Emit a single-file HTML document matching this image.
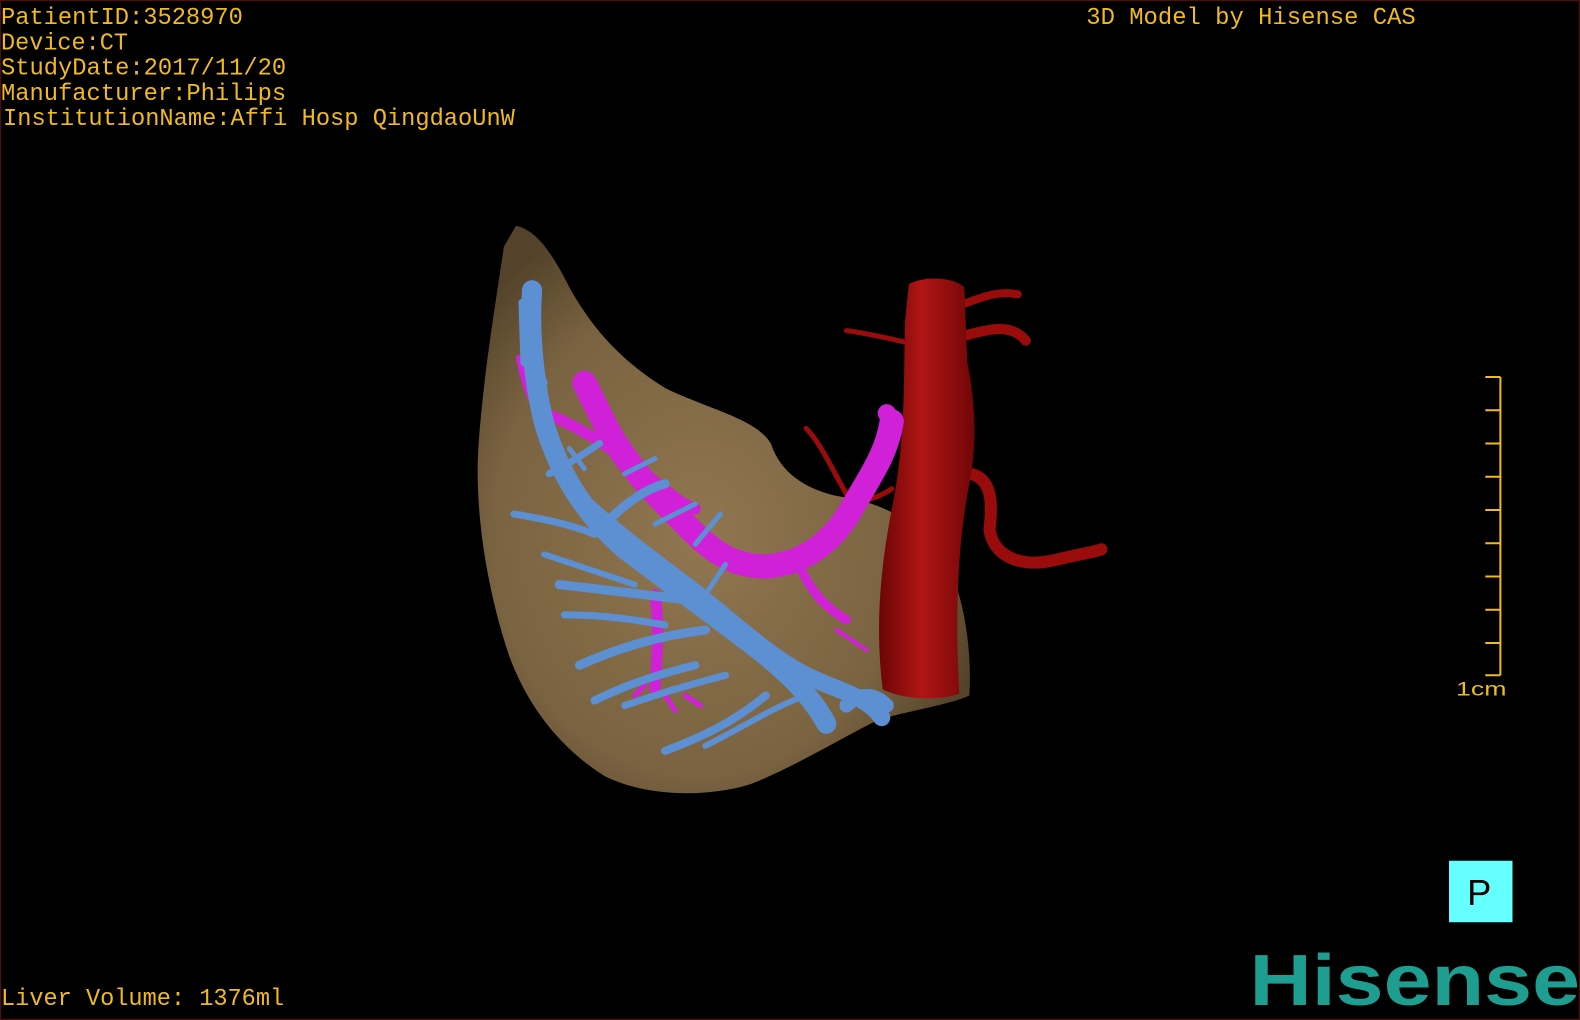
<!DOCTYPE html>
<html><head><meta charset="utf-8"><style>
html,body{margin:0;padding:0;background:#000;width:1580px;height:1020px;overflow:hidden}
svg{display:block}
</style></head><body>
<svg width="1580" height="1020" viewBox="0 0 1568 1012" preserveAspectRatio="none" xmlns="http://www.w3.org/2000/svg">
<defs>
<radialGradient id="lg" cx="0.45" cy="0.55" r="0.6">
<stop offset="0" stop-color="#917650"/><stop offset="0.7" stop-color="#7a6341"/><stop offset="1" stop-color="#54432a"/>
</radialGradient>
<linearGradient id="ag" x1="0" x2="1">
<stop offset="0" stop-color="#6a0505"/><stop offset="0.45" stop-color="#b01515"/><stop offset="1" stop-color="#700606"/>
</linearGradient>
</defs>
<rect x="0.5" y="0.5" width="1567" height="1011" fill="#000" stroke="#5a0a0a"/>
<path d="M512,224 C530,228 545,245 565,285 C590,330 620,360 660,385 C700,405 750,415 765,440 C775,470 800,485 830,492 C870,498 900,510 930,545 C955,575 965,640 962,690 C940,700 900,705 870,715 C830,735 790,760 745,778 C700,792 640,790 600,770 C560,745 525,705 505,650 C485,590 470,510 475,440 C480,370 492,300 500,245 Z" fill="url(#lg)"/>
<g fill="none" stroke="#9a0c0c" stroke-linecap="round">
<path d="M840,328 C870,332 890,338 910,342" stroke-width="5"/>
<path d="M955,302 C975,295 990,288 1010,292" stroke-width="8"/>
<path d="M958,333 C985,325 1005,322 1018,338" stroke-width="10"/>
<path d="M800,425 C815,440 825,465 840,490 C855,500 870,495 885,485" stroke-width="5"/>
<path d="M963,470 C985,475 985,500 982,525 C985,550 1010,565 1050,555 C1070,550 1085,548 1093,545" stroke-width="12"/>
</g>
<path d="M902,282 C915,274 945,274 957,285 L960,360 C968,400 970,440 962,480 C952,530 947,600 952,688 C935,695 898,695 876,684 C868,620 874,560 886,500 C898,440 897,380 898,320 Z" fill="url(#ag)"/>
<g fill="none" stroke="#d020d8" stroke-linecap="round" stroke-linejoin="round">
<path d="M885,418 C880,450 865,470 845,505 C825,540 795,560 760,562 C720,562 700,540 675,515 C650,490 620,460 600,420 C590,400 585,390 580,380" stroke-width="24"/>
<path d="M885,418 L880,410" stroke-width="18"/>
<path d="M535,408 C570,420 600,440 640,470 C660,485 675,500 690,505" stroke-width="11"/>
<path d="M515,355 C520,380 525,395 535,410" stroke-width="6"/>
<path d="M795,565 C805,585 815,600 840,615" stroke-width="9"/>
<path d="M650,590 C655,620 652,650 650,685" stroke-width="11"/>
<path d="M640,680 L630,690 M660,690 L670,705 M680,690 L695,700" stroke-width="5"/>
<path d="M830,625 L860,645" stroke-width="4"/>
</g>
<g fill="none" stroke="#5c90d2" stroke-linecap="round" stroke-linejoin="round">
<path d="M528,288 C525,330 530,380 540,420 C555,470 580,510 620,545 C660,575 700,605 740,635 C780,665 805,690 820,718" stroke-width="20"/>
<path d="M570,490 C600,520 640,550 680,580 C720,610 760,650 800,670 C830,685 860,690 875,712" stroke-width="17"/>
<path d="M532,290 L532,330 M518,300 L520,360 M525,340 L540,380" stroke-width="7"/>
<path d="M545,470 C565,460 580,450 595,440" stroke-width="7"/>
<path d="M600,520 C620,500 640,485 660,480" stroke-width="9"/>
<path d="M510,510 C540,515 565,520 590,530" stroke-width="7"/>
<path d="M540,550 C570,560 600,570 630,580" stroke-width="6"/>
<path d="M555,580 C600,585 640,590 680,595" stroke-width="9"/>
<path d="M560,610 C600,610 630,615 660,620" stroke-width="7"/>
<path d="M575,660 C620,640 660,630 700,625" stroke-width="9"/>
<path d="M590,695 C620,680 650,670 690,660" stroke-width="8"/>
<path d="M620,700 C650,690 680,680 720,670" stroke-width="7"/>
<path d="M660,745 C700,730 730,715 760,690" stroke-width="8"/>
<path d="M700,740 C740,720 770,700 800,690" stroke-width="6"/>
<path d="M650,520 L690,500 M690,540 L715,510 M700,590 L720,560" stroke-width="5"/>
<path d="M840,700 C850,690 865,685 880,700" stroke-width="14"/>
<path d="M620,470 L650,455 M580,465 L565,445" stroke-width="5"/>
</g>
<g font-family="'Liberation Mono',monospace" font-size="23.5" fill="#f0ba20">
<text x="1" y="24" textLength="240" lengthAdjust="spacingAndGlyphs">PatientID:3528970</text>
<text x="1" y="49" textLength="126" lengthAdjust="spacingAndGlyphs">Device:CT</text>
<text x="1" y="74" textLength="283" lengthAdjust="spacingAndGlyphs">StudyDate:2017/11/20</text>
<text x="1" y="99" textLength="283" lengthAdjust="spacingAndGlyphs">Manufacturer:Philips</text>
<text x="3" y="124" textLength="508" lengthAdjust="spacingAndGlyphs">InstitutionName:Affi Hosp QingdaoUnW</text>
<text x="1078" y="24" textLength="327" lengthAdjust="spacingAndGlyphs">3D Model by Hisense CAS</text>
<text x="1" y="997" textLength="281" lengthAdjust="spacingAndGlyphs">Liver Volume: 1376ml</text>
</g>
<g stroke="#f0ba20" stroke-width="2" fill="none">
<path d="M1489,374 L1489,670"/>
<path d="M1474,374H1489M1474,407H1489M1474,440H1489M1474,473H1489M1474,506H1489M1474,539H1489M1474,572H1489M1474,605H1489M1474,638H1489M1474,670H1489"/>
</g>
<text x="1445" y="690" font-family="'Liberation Sans',sans-serif" font-size="19" fill="#f0ba20" textLength="50" lengthAdjust="spacingAndGlyphs">1cm</text>
<rect x="1438" y="854" width="63" height="61" fill="#66ffff"/>
<text x="1456" y="898" font-family="'Liberation Sans',sans-serif" font-size="36" fill="#000">P</text>
<text x="1240" y="997" font-family="'Liberation Sans',sans-serif" font-weight="bold" font-size="72" fill="#1e9e90" textLength="328" lengthAdjust="spacingAndGlyphs">Hisense</text>
</svg>
</body></html>
